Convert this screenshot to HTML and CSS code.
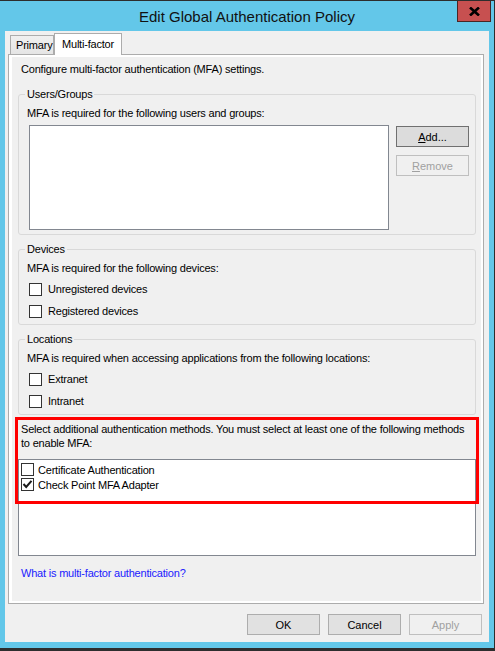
FILE: index.html
```html
<!DOCTYPE html>
<html lang="en">
<head>
    <meta charset="UTF-8">
    <meta name="viewport" content="width=device-width, initial-scale=1.0">
    <title>Edit Global Authentication Policy</title>
    <link rel="stylesheet" href="styles.css">
</head>
<body>
    <div class="window">
        <div class="titlebar">
            <span class="title">Edit Global Authentication Policy</span>
            <div class="close">
                <svg width="11" height="9" viewBox="0 0 11 9">
                    <path d="M1 0.5 L10 8.5 M10 0.5 L1 8.5" stroke="#000" stroke-width="2.6" fill="none"/>
                </svg>
            </div>
        </div>

        <div class="client">
            <div class="tabs">
                <div class="tab">Primary</div>
                <div class="tab selected">Multi-factor</div>
            </div>

            <div class="panel">
                <div class="page">
                    <p class="intro">Configure multi-factor authentication (MFA) settings.</p>

                    <fieldset class="group">
                        <legend>Users/Groups</legend>
                        <p>MFA is required for the following users and groups:</p>
                        <div class="users-row">
                            <div class="listbox"></div>
                            <div class="side-buttons">
                                <button class="btn default"><u>A</u>dd...</button>
                                <button class="btn" disabled><u>R</u>emove</button>
                            </div>
                        </div>
                    </fieldset>

                    <fieldset class="group">
                        <legend>Devices</legend>
                        <p>MFA is required for the following devices:</p>
                        <div class="check-row first"><span class="box"></span><span class="label">Unregistered devices</span></div>
                        <div class="check-row"><span class="box"></span><span class="label">Registered devices</span></div>
                    </fieldset>

                    <fieldset class="group">
                        <legend>Locations</legend>
                        <p>MFA is required when accessing applications from the following locations:</p>
                        <div class="check-row first"><span class="box"></span><span class="label">Extranet</span></div>
                        <div class="check-row"><span class="box"></span><span class="label">Intranet</span></div>
                    </fieldset>

                    <p class="methods-text">Select additional authentication methods. You must select at least one of the following methods<br>to enable MFA:</p>

                    <div class="methods">
                        <div class="method-row"><span class="box"></span><span class="label">Certificate Authentication</span></div>
                        <div class="method-row">
                            <span class="box">
                                <svg width="11" height="11" viewBox="0 0 11 11">
                                    <path d="M1.5 5 L4.2 8 L9.5 1.8" stroke="#1a1a1a" stroke-width="2" fill="none"/>
                                </svg>
                            </span>
                            <span class="label">Check Point MFA Adapter</span>
                        </div>
                    </div>

                    <a class="help" href="#">What is multi-factor authentication?</a>

                    <div class="highlight"></div>
                </div>
            </div>

            <div class="buttons">
                <button class="btn">OK</button>
                <button class="btn">Cancel</button>
                <button class="btn" disabled>Apply</button>
            </div>
        </div>
    </div>
</body>
</html>
```

FILE: styles.css
```css
body {
    margin: 0;
    padding: 0;
    font-family: "Liberation Sans", Arial, sans-serif;
    font-size: 11px;
    letter-spacing: -0.2px;
    color: #000;
}

.window {
    box-sizing: border-box;
    width: 495px;
    height: 651px;
    background-color: #63c7e9;
    border-top: 1px solid #2d2d2d;
    border-right: 1px solid #2d2d2d;
    border-bottom: 3px solid #2d2d2d;
}

.titlebar {
    position: relative;
    height: 30px;
    display: flex;
    align-items: center;
    justify-content: center;
}

.title {
    font-size: 15px;
    letter-spacing: 0;
    color: #111;
    padding-top: 1px;
}

.close {
    position: absolute;
    top: 0;
    right: 3px;
    box-sizing: border-box;
    width: 34px;
    height: 21px;
    background-color: #c75050;
    border: 1px solid #4a2525;
    border-top: none;
    display: flex;
    align-items: center;
    justify-content: center;
}

.client {
    box-sizing: border-box;
    margin-left: 5px;
    width: 484px;
    height: 611px;
    background-color: #f0f0f0;
    padding: 2px 5px 0 3px;
}

.tabs {
    display: flex;
    align-items: flex-end;
    height: 21px;
    padding-left: 2px;
}

.tab {
    box-sizing: border-box;
    width: 44px;
    height: 19px;
    padding-left: 5px;
    border: 1px solid #acacac;
    border-bottom: none;
    background: linear-gradient(#f0f0f0, #e5e5e5);
    display: flex;
    align-items: center;
    white-space: nowrap;
}

.tab.selected {
    position: relative;
    z-index: 1;
    width: 68px;
    height: 22px;
    margin-bottom: -1px;
    padding-left: 7px;
    padding-bottom: 2px;
    background: #fff;
}

.panel {
    box-sizing: border-box;
    width: 476px;
    height: 550px;
    border: 1px solid #acacac;
    background-color: #fff;
    padding: 2px 2px 2px 3px;
}

.page {
    position: relative;
    box-sizing: border-box;
    height: 100%;
    background-color: #f0f0f0;
    padding: 5px 5px 0 6px;
}

p {
    margin: 0;
    line-height: 14px;
    white-space: nowrap;
}

.intro {
    padding-left: 3px;
}

.group {
    margin: 7px 0 0;
    min-width: 0;
    border: 1px solid #d9d9d9;
    border-radius: 3px;
    padding: 5px 6px 2px 8px;
}

.group:first-of-type {
    margin-top: 11px;
    padding-bottom: 4px;
}

.group legend {
    margin-left: -2px;
    padding: 0 2px;
    line-height: 14px;
}

.users-row {
    display: flex;
    margin-top: 5px;
}

.listbox {
    box-sizing: border-box;
    width: 360px;
    height: 105px;
    margin-left: 2px;
    background-color: #fff;
    border: 1px solid #828790;
}

.side-buttons {
    display: flex;
    flex-direction: column;
    gap: 8px;
    margin: 1px 0 0 7px;
}

.btn {
    box-sizing: border-box;
    width: 73px;
    height: 21px;
    padding: 0;
    font-family: "Liberation Sans", Arial, sans-serif;
    font-size: 11px;
    color: #000;
    background-color: #e1e1e1;
    border: 1px solid #adadad;
}

.btn.default {
    border-color: #707070;
    background-color: #dcdcdc;
}

.btn:disabled {
    color: #a0a0a0;
    background-color: #f0f0f0;
    border-color: #bfbfbf;
}

.check-row {
    display: flex;
    align-items: center;
    height: 22px;
    padding-left: 2px;
}

.check-row.first {
    margin-top: 3px;
}

.box {
    box-sizing: border-box;
    width: 13px;
    height: 13px;
    border: 1px solid #333;
    background-color: #fff;
    display: flex;
    align-items: center;
    justify-content: center;
    flex-shrink: 0;
}

.check-row .label {
    margin-left: 6px;
}

.methods-text {
    margin-top: 7px;
    padding-left: 3px;
}

.methods {
    box-sizing: border-box;
    margin-top: 9px;
    width: 458px;
    height: 97px;
    background-color: #fff;
    border: 1px solid #828790;
    padding: 2px 0 0 2px;
}

.method-row {
    display: flex;
    align-items: center;
    height: 15px;
}

.method-row .label {
    margin-left: 4px;
}

.help {
    display: block;
    margin-top: 10px;
    padding-left: 3px;
    line-height: 14px;
    color: #2020ff;
    text-decoration: none;
}

.highlight {
    position: absolute;
    left: 3px;
    top: 360px;
    box-sizing: border-box;
    width: 464px;
    height: 87px;
    border: 3px solid #ff0000;
}

.buttons {
    display: flex;
    justify-content: flex-end;
    gap: 8px;
    margin-top: 10px;
    padding-right: 2px;
}
```
